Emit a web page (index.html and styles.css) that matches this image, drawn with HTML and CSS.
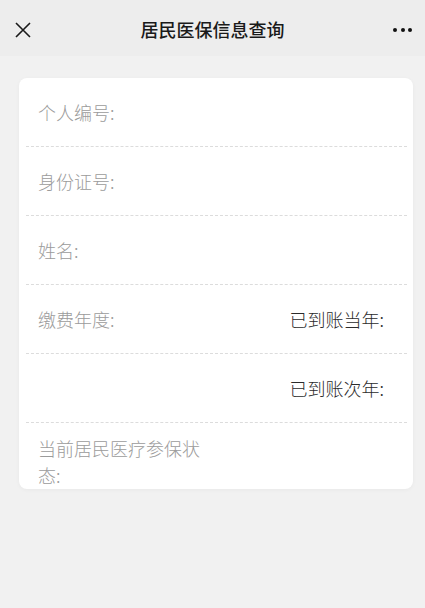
FILE: index.html
```html
<!DOCTYPE html>
<html lang="zh-CN">
<head>
<meta charset="utf-8">
<title>居民医保信息查询</title>
<link rel="stylesheet" href="styles.css">
</head>
<body>
<header class="navbar">
  <span class="nav-close">
    <svg width="16" height="16" viewBox="0 0 16 16"><path d="M1 1 L15 15 M15 1 L1 15" stroke="#1a1a1a" stroke-width="1.6" fill="none"/></svg>
  </span>
  <h1 class="nav-title">居民医保信息查询</h1>
  <span class="nav-more">
    <i class="dot"></i><i class="dot"></i><i class="dot"></i>
  </span>
</header>
<main class="page">
  <section class="card">
    <div class="row"><span class="label">个人编号:</span></div>
    <div class="row"><span class="label">身份证号:</span></div>
    <div class="row"><span class="label">姓名:</span></div>
    <div class="row"><span class="label">缴费年度:</span><span class="label-dark">已到账当年:</span></div>
    <div class="row"><span class="label"></span><span class="label-dark">已到账次年:</span></div>
    <div class="row row-last"><span class="label label-wrap">当前居民医疗参保状态:</span></div>
  </section>
</main>
</body>
</html>
```
FILE: styles.css
```css
* { box-sizing: border-box; }
html, body { margin: 0; padding: 0; }
body {
  background: #f1f1f1;
  font-family: "Noto Sans CJK SC", "Noto Sans", sans-serif;
  width: 425px;
  min-height: 608px;
}
.navbar {
  height: 56px;
  background: #ededed;
  display: flex;
  align-items: center;
  justify-content: space-between;
  padding: 0 13px 0 15px;
  position: relative;
}
.nav-close { display: flex; width: 16px; height: 16px; margin-top: 3px; }
.nav-title {
  margin: 0;
  font-size: 18px;
  font-weight: 500;
  color: #1a1a1a;
  position: absolute;
  left: 0; right: 0;
  text-align: center;
  top: 16px;
  line-height: 26px;
  pointer-events: none;
}
.nav-more { display: flex; gap: 3.5px; align-items: center; margin-top: 3px; }
.dot { display: block; width: 4px; height: 4px; border-radius: 50%; background: #111; }
.page { padding: 22px 12px 0 19px; }
.card {
  background: #fff;
  border-radius: 8px;
  box-shadow: 0 1px 4px rgba(0,0,0,0.04);
  padding: 0 6px 0 7px;
}
.row {
  height: 69px;
  border-bottom: 1px dashed #dcdcdc;
  display: flex;
  align-items: center;
  justify-content: space-between;
  padding: 0 23px 0 12px;
}
.label { font-size: 18px; font-weight: 300; color: #9b9b9b; line-height: 26px; }
.label-dark { font-size: 18px; font-weight: 300; color: #2b2b2b; line-height: 26px; }
.row-last {
  border-bottom: none;
  height: auto;
  align-items: flex-start;
  padding-top: 12px;
  padding-bottom: 0;
}
.label-wrap { max-width: 168px; line-height: 27px; }
```
